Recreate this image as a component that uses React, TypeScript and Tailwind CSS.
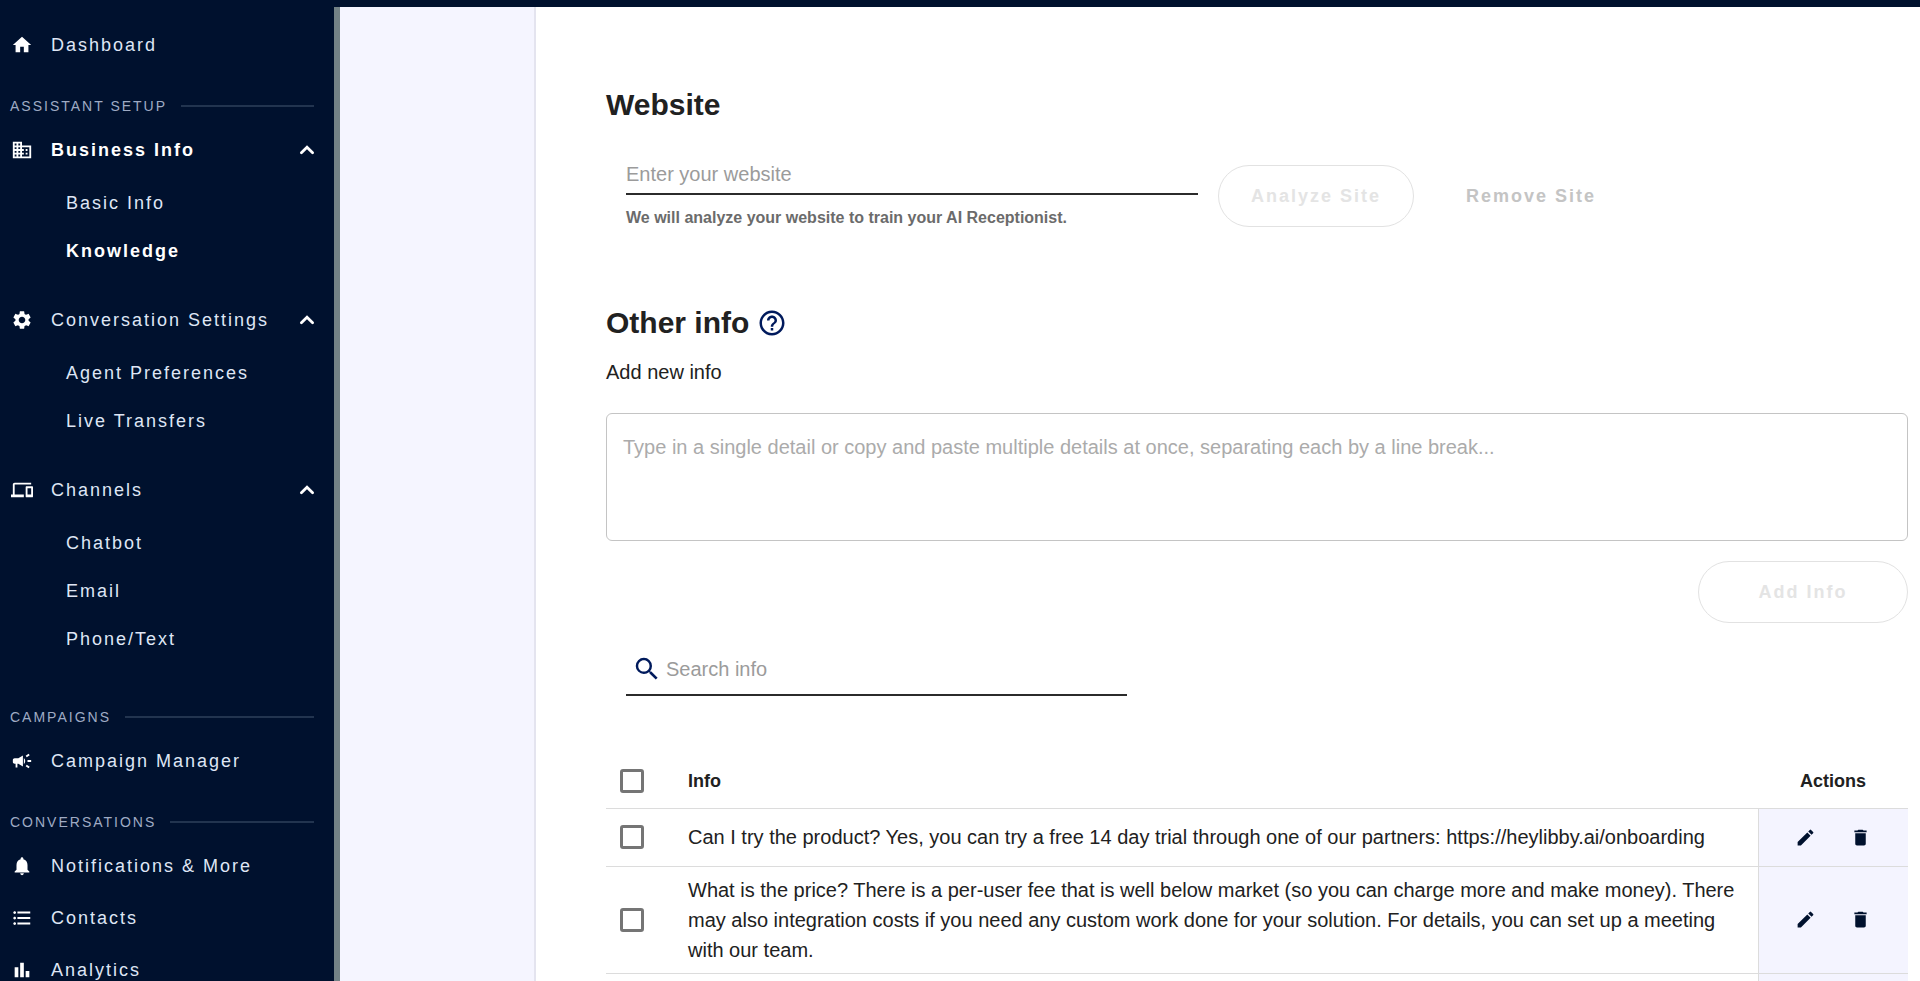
import { Fragment } from 'react'
import type { IconType } from 'react-icons'
import {
  MdBarChart,
  MdCampaign,
  MdDelete,
  MdDevices,
  MdDomain,
  MdEdit,
  MdFormatListBulleted,
  MdHelpOutline,
  MdHome,
  MdNotifications,
  MdSearch,
  MdSettings,
} from 'react-icons/md'

type NavItem = {
  label: string
  icon: IconType
  active?: boolean
  children?: { label: string; active?: boolean }[]
}

const sections: { title?: string; items: NavItem[] }[] = [
  { items: [{ label: 'Dashboard', icon: MdHome }] },
  {
    title: 'ASSISTANT SETUP',
    items: [
      {
        label: 'Business Info',
        icon: MdDomain,
        active: true,
        children: [{ label: 'Basic Info' }, { label: 'Knowledge', active: true }],
      },
      {
        label: 'Conversation Settings',
        icon: MdSettings,
        children: [{ label: 'Agent Preferences' }, { label: 'Live Transfers' }],
      },
      {
        label: 'Channels',
        icon: MdDevices,
        children: [{ label: 'Chatbot' }, { label: 'Email' }, { label: 'Phone/Text' }],
      },
    ],
  },
  { title: 'CAMPAIGNS', items: [{ label: 'Campaign Manager', icon: MdCampaign }] },
  {
    title: 'CONVERSATIONS',
    items: [
      { label: 'Notifications & More', icon: MdNotifications },
      { label: 'Contacts', icon: MdFormatListBulleted },
      { label: 'Analytics', icon: MdBarChart },
    ],
  },
]

const rows = [
  'Can I try the product? Yes, you can try a free 14 day trial through one of our partners: https://heylibby.ai/onboarding',
  'What is the price? There is a per-user fee that is well below market (so you can charge more and make money). There may also integration costs if you need any custom work done for your solution. For details, you can set up a meeting with our team.',
  '',
]

function ChevronUp() {
  return (
    <svg
      viewBox="0 0 24 24"
      className="size-7 shrink-0 text-white"
      fill="none"
      stroke="currentColor"
      strokeWidth="2.4"
      strokeLinecap="round"
      aria-hidden="true"
    >
      <path d="M7.2 14.4 12 9.6l4.8 4.8" />
    </svg>
  )
}

function NavGroup({ item }: { item: NavItem }) {
  const Icon = item.icon
  const weight = item.active ? 'font-bold text-white' : 'text-[#dfe6f5]'

  if (!item.children) {
    return (
      <a href="#" className="flex h-[52px] items-center pl-[11px] text-[#dfe6f5]">
        <Icon className="mr-[18px] size-[22px] shrink-0 text-white" />
        {item.label}
      </a>
    )
  }

  return (
    <div className="pb-[19px]">
      <button type="button" className={`flex h-[52px] w-full items-center pr-[13px] pl-[11px] text-left tracking-[2px] ${weight}`}>
        <Icon className="mr-[18px] size-[22px] shrink-0 text-white" />
        <span className="flex-1 whitespace-nowrap">{item.label}</span>
        <ChevronUp />
      </button>
      <div className="pt-[3px]">
        {item.children.map((child) => (
          <a
            key={child.label}
            href="#"
            className={`flex h-12 items-center pl-[66px] ${child.active ? 'font-bold text-white' : 'text-[#dfe6f5]'}`}
          >
            {child.label}
          </a>
        ))}
      </div>
    </div>
  )
}

function Sidebar() {
  return (
    <nav className="w-[334px] shrink-0 overflow-hidden bg-[#00112e] pt-3 text-lg tracking-[2px]">
      {sections.map((section, i) => (
        <Fragment key={i}>
          {section.title && (
            <h2 className="mt-[17px] flex h-9 items-center gap-3.5 pr-5 pl-2.5 text-sm text-[#9fabc4]">
              {section.title}
              <span className="h-0.5 flex-1 bg-[#22344f]" />
            </h2>
          )}
          {section.items.map((item) => (
            <NavGroup key={item.label} item={item} />
          ))}
        </Fragment>
      ))}
    </nav>
  )
}

const checkbox = 'block size-6 appearance-none rounded-[3px] border-[3px] border-[#757575] bg-white'

function InfoTable() {
  return (
    <table className="mt-[59px] w-full border-collapse text-left">
      <thead>
        <tr className="h-[53px] border-b border-[#dcdcdc] text-lg">
          <th className="w-[82px] pl-3.5">
            <input type="checkbox" aria-label="Select all" className={checkbox} />
          </th>
          <th className="font-bold">Info</th>
          <th className="w-[150px] text-center font-bold">Actions</th>
        </tr>
      </thead>
      <tbody>
        {rows.map((info, i) => (
          <tr key={i} className="h-[58px] border-b border-[#dcdcdc]">
            <td className="pl-3.5">
              <input type="checkbox" aria-label={`Select row ${i + 1}`} className={checkbox} />
            </td>
            <td className="py-2 pr-4 text-xl leading-[30px]">{info}</td>
            <td className="border-l border-[#dcdcdc] bg-[#f4f4ff] text-[#00112e]">
              <div className="flex items-center justify-center gap-[34px]">
                <button type="button" aria-label="Edit">
                  <MdEdit className="size-[21px]" />
                </button>
                <button type="button" aria-label="Delete">
                  <MdDelete className="size-[21px]" />
                </button>
              </div>
            </td>
          </tr>
        ))}
      </tbody>
    </table>
  )
}

export default function App() {
  return (
    <div className="flex h-screen flex-col overflow-hidden bg-white font-['Liberation_Sans',Arial,sans-serif] text-[#212121]">
      <header className="h-[7px] shrink-0 bg-[#00112e]" />
      <div className="flex min-h-0 flex-1">
        <Sidebar />
        <div className="w-1.5 shrink-0 bg-[#738286]" />
        <div className="w-[196px] shrink-0 border-r-2 border-[#e4e4ef] bg-[#f5f5ff]" />

        <main className="min-w-0 flex-1 overflow-hidden pt-[78px] pr-3 pl-[70px]">
          <h1 className="text-3xl leading-10 font-bold">Website</h1>
          <div className="mt-8 flex items-start pl-5">
            <div className="w-[572px]">
              <input
                type="text"
                aria-label="Website"
                placeholder="Enter your website"
                className="block h-[38px] w-full border-b-2 border-[#2b2b2b] pb-0.5 text-xl outline-none placeholder:text-[#9b9b9b]"
              />
              <p className="mt-[11px] text-base leading-6 font-bold text-[#6b6b6b]">
                We will analyze your website to train your AI Receptionist.
              </p>
            </div>
            <button
              type="button"
              disabled
              className="mt-2 ml-5 h-[62px] w-[196px] rounded-full border border-[#e2e2e2] text-lg font-bold tracking-[2px] text-[#e4e4e4]"
            >
              Analyze Site
            </button>
            <button
              type="button"
              disabled
              className="mt-2 ml-[52px] h-[62px] text-lg font-bold tracking-[2px] text-[#c4c4c4]"
            >
              Remove Site
            </button>
          </div>

          <div className="mt-[73px] flex items-center gap-2">
            <h2 className="text-3xl leading-10 font-bold">Other info</h2>
            <MdHelpOutline className="size-[30px] text-[#001a5c]" />
          </div>
          <label htmlFor="new-info" className="mt-3.5 block text-xl leading-[30px]">
            Add new info
          </label>
          <textarea
            id="new-info"
            placeholder="Type in a single detail or copy and paste multiple details at once, separating each by a line break..."
            className="mt-[26px] block h-32 w-full resize-none rounded-md border border-[#c4c4c4] px-4 py-[18px] text-xl leading-[30px] outline-none placeholder:text-[#ababab]"
          />
          <button
            type="button"
            disabled
            className="mt-5 ml-auto block h-[62px] w-[210px] rounded-full border border-[#e2e2e2] text-lg font-bold tracking-[2px] text-[#e4e4e4]"
          >
            Add Info
          </button>

          <div className="mt-5 ml-5 flex h-[53px] w-[501px] items-center gap-1 border-b-2 border-[#2b2b2b] pl-1.5">
            <MdSearch className="size-[30px] shrink-0 text-[#001a5c]" />
            <input
              type="search"
              aria-label="Search info"
              placeholder="Search info"
              className="min-w-0 flex-1 text-xl outline-none placeholder:text-[#9b9b9b]"
            />
          </div>

          <InfoTable />
        </main>
      </div>
    </div>
  )
}
